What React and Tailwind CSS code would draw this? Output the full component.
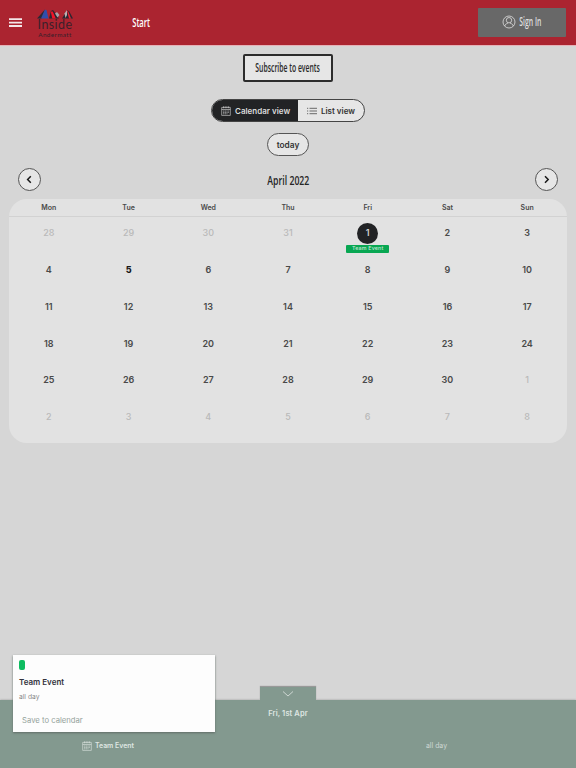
const days = ['Mon', 'Tue', 'Wed', 'Thu', 'Fri', 'Sat', 'Sun'];
const cells = [28, 29, 30, 31, ...Array.from({ length: 30 }, (_, i) => i + 1), 1, 2, 3, 4, 5, 6, 7, 8];

function Logo() {
  return (
    <div className="absolute left-[37px] top-[8.5px] flex w-[36px] flex-col items-center font-['Lato',sans-serif] text-[#3c202b]">
      <svg width="36" height="10" viewBox="0 0 36 10">
        <path d="M0 9.5 8 .6 5 9.5Z" fill="#292935" />
        <path d="M4 9.5 7.8.7 9.5 1 11.5 9.5Z" fill="#304eab" />
        <path d="m12 9.5 2-7.5 2-1 6 8.5Z" fill="#2b2630" />
        <path d="m13.7 2.5 1.6 7h3.5l-3-7Z" fill="#f01428" />
        <path d="m18 4.5 2-1.5 2.5 3-2 2.5Z" fill="#aaa0a5" />
        <path d="m25 9.5 5-8 2 .5 4 7.5Z" fill="#2b2630" />
        <path d="m27.5 4.5 2.5-3.5v5l-1.5 3Z" fill="#b9b1b4" />
        <path d="m30 2 2 7.5h2L31 2Z" fill="#ed2034" />
      </svg>
      <span className="whitespace-nowrap text-[12.5px] leading-[12px] tracking-[0.4px]">Inside</span>
      <span className="whitespace-nowrap text-[6.3px] font-medium leading-[7px] tracking-[0.4px]">Andermatt</span>
    </div>
  );
}

function CalendarIcon({ className }) {
  return (
    <svg className={className} width="10" height="10" viewBox="0 0 10 10" fill="none" stroke="currentColor" strokeWidth=".6">
      <path d="M.7 1.4h8.6v8H.7zM.7 3.5h8.6M2.5.3v2M4.2.3v2M5.9.3v2M7.6.3v2" />
      <path d="M2 5h6M2 6.4h6M2 7.8h4.5" strokeDasharray="1.3 .4" />
    </svg>
  );
}

function Condensed({ className, scale = 'scale-x-[0.61]', children }) {
  return (
    <span className={`flex justify-center whitespace-nowrap font-['Open_Sans',sans-serif] ${className}`}>
      <span className={`shrink-0 ${scale}`}>{children}</span>
    </span>
  );
}

function Arrow({ next }) {
  return (
    <button className="flex size-[23px] items-center justify-center rounded-full border border-[#555] bg-[#e6e6e6] text-[#181818]">
      <svg width="9" height="9" viewBox="0 0 9 9" fill="none" stroke="currentColor" strokeWidth="1.5">
        <path d={next ? 'M3 1.2 6.2 4.5 3 7.8' : 'M5.8 1.2 2.6 4.5 5.8 7.8'} />
      </svg>
    </button>
  );
}

export default function App() {
  return (
    <div className="relative flex h-[768px] w-[576px] flex-col overflow-hidden bg-[#d6d6d6] font-['Inter',sans-serif] text-[#494949]">
      <header className="relative flex h-[45px] shrink-0 items-center bg-[#ab2430] pl-[9px] pr-[10px] text-white shadow-[0_1px_0_#e5b2b8]">
        <svg width="13" height="9" viewBox="0 0 13 9" fill="#f3e7e9">
          <path d="M0 .2h13v1.8H0zM0 3.7h13v1.8H0zM0 7.1h13v1.8H0z" />
        </svg>
        <Logo />
        <Condensed scale="scale-x-[0.63]" className="ml-[110px] w-[18px] text-[12px] font-semibold">Start</Condensed>
        <button className="ml-auto flex h-[29px] w-[88px] items-center rounded-[1px] bg-[#686868] pb-px pl-[24px] text-[#dedede]">
          <svg width="14" height="14" viewBox="0 0 14 14" fill="none" stroke="currentColor" strokeWidth=".8">
            <circle cx="7" cy="7" r="6" />
            <circle cx="7" cy="5.2" r="2.7" />
            <path d="M2.7 11.1c.3-1.7 1.5-2.4 3.1-2.8M11.3 11.1C11 9.4 9.8 8.7 8.2 8.3" />
          </svg>
          <Condensed scale="scale-x-[0.57]" className="ml-[3px] w-[22px] text-[12px] font-semibold">Sign In</Condensed>
        </button>
      </header>

      <button className="mt-[9px] flex h-[28px] w-[90px] shrink-0 items-center justify-center self-center rounded-[2px] border-2 border-[#2c2c2c] bg-[#e6e6e6] text-[#292929]">
        <Condensed scale="scale-x-[0.57]" className="w-[66px] text-[12px] font-semibold">Subscribe to events</Condensed>
      </button>

      <div className="mt-[17px] flex h-[23px] w-[154px] shrink-0 self-center overflow-hidden rounded-full border border-[#444] bg-[#e6e6e6] text-[8px] font-semibold">
        <div className="flex w-[86px] items-center bg-[#222325] pl-[9px] text-[#dcdcdc]">
          <CalendarIcon />
          <span className="ml-[4px] whitespace-nowrap">Calendar view</span>
        </div>
        <div className="flex flex-1 items-center pl-[9px] text-[#333]">
          <svg width="10" height="8" viewBox="0 0 10 8" fill="none" stroke="currentColor" strokeWidth=".7">
            <path d="M0 1.3h1.2M2.5 1.3H10M0 4h1.2M2.5 4H10M0 6.7h1.2M2.5 6.7H10" />
          </svg>
          <span className="ml-[4px] whitespace-nowrap">List view</span>
        </div>
      </div>

      <button className="mt-[11px] flex h-[23px] w-[42px] shrink-0 items-center justify-center self-center rounded-full border border-[#555] bg-[#e6e6e6] pt-px text-[8.3px] font-semibold text-[#333]">today</button>

      <div className="mt-[12px] flex h-[23px] shrink-0 items-center justify-between px-[18px]">
        <Arrow />
        <Condensed scale="scale-x-[0.67]" className="w-[43px] pt-[2px] text-[13px] font-semibold text-[#252525]">April 2022</Condensed>
        <Arrow next />
      </div>

      <main className="mx-[9px] mt-[8px] h-[244px] shrink-0 rounded-[18px] bg-[#e2e2e2]">
        <div className="grid h-[18px] grid-cols-7 items-center border-b border-[#d2d2d2] pt-px text-center text-[7px] font-semibold">
          {days.map((d) => <span key={d}>{d}</span>)}
        </div>
        <div className="grid auto-rows-[36.75px] grid-cols-7 text-[9px] font-semibold">
          {cells.map((n, i) => {
            const outside = i < 4 || i > 33;
            const today = i === 8;
            return (
              <div key={i} className={`flex flex-col items-center pt-[5.5px] ${outside ? 'font-medium text-[#b9b9b9]' : today ? 'font-extrabold text-[#181818]' : ''}`}>
                <span className={`flex size-[21px] shrink-0 items-center justify-center rounded-full ${i === 4 ? 'bg-[#222325] text-[#d5d5d5]' : ''}`}>{n}</span>
                {i === 4 && <span className="mt-[1px] flex h-[8.5px] w-[43px] shrink-0 items-center justify-center rounded-[1px] bg-[#08a752] pt-px text-[5.3px] font-medium tracking-[0.2px] text-[#c7e8d5]">Team Event</span>}
              </div>
            );
          })}
        </div>
      </main>

      <footer className="relative mt-auto flex h-[68px] shrink-0 flex-col bg-[#83998f] text-[#dfe6e2] shadow-[0_0_2px_#999]">
        <div className="absolute left-[260px] top-[-13px] flex h-[13px] w-[56px] justify-center bg-[#83998f] pt-[4px] shadow-[0_-1px_1px_#999]">
          <svg width="12" height="6" viewBox="0 0 12 6" fill="none" stroke="currentColor" strokeWidth=".8"><path d="m1 .5 5 4.5 5-4.5" /></svg>
        </div>
        <span className="mt-[9px] text-center text-[7.5px] font-semibold leading-[10px] tracking-[0.1px]">Fri, 1st Apr</span>
        <div className="mt-[21px] flex h-[11px] items-center pl-[82px] text-[6.9px]">
          <CalendarIcon />
          <span className="ml-[3px] w-[48px] whitespace-nowrap pt-px font-semibold">Team Event</span>
          <span className="ml-[283px] whitespace-nowrap pt-px text-[#ced8d3]">all day</span>
        </div>
      </footer>

      <aside className="absolute left-[13px] top-[655px] flex h-[77px] w-[202px] flex-col items-start bg-[#fdfdfd] pl-[6px] pt-[5px] shadow-[0_1px_2px_#626c67]">
        <span className="h-[10px] w-[5.5px] rounded-[2px] bg-[#0ebc60]" />
        <span className="mt-[7px] text-[8px] font-semibold leading-[10px] text-[#33323c]">Team Event</span>
        <span className="mt-[5px] text-[6.7px] leading-[10px] text-[#888]">all day</span>
        <span className="ml-[3px] mt-[14px] text-[7.7px] leading-[10px] text-[#95a39c]">Save to calendar</span>
      </aside>
    </div>
  );
}
